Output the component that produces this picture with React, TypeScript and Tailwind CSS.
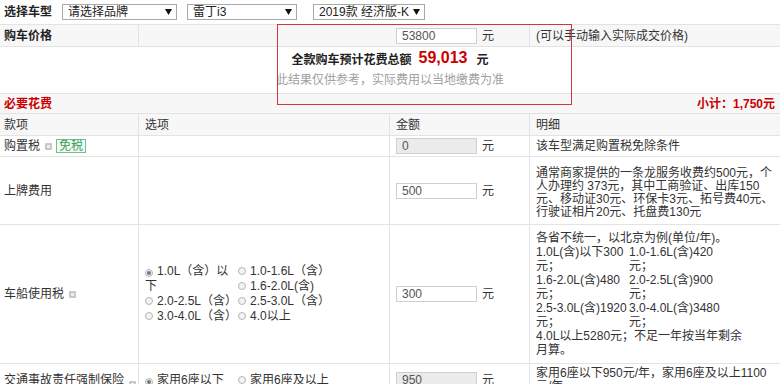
import React from "react";

const FONT = "font-['Liberation_Sans','Noto_Sans_CJK_SC',sans-serif]";

function Arrow() {
  return (
    <svg width="7" height="6" viewBox="0 0 7 6" className="shrink-0">
      <path d="M0 0 H7 L3.5 6 Z" fill="#111" />
    </svg>
  );
}

function FakeSelect({ label, width, ml }: { label: string; width: string; ml: string }) {
  return (
    <div
      className={`${width} ${ml} h-[16px] flex items-center justify-between border border-[#a9a9a9] bg-white pl-[5px] pr-[4px] text-[12px] leading-[14px] text-[#222]`}
    >
      <span className="whitespace-nowrap">{label}</span>
      <Arrow />
    </div>
  );
}

function Tip() {
  return (
    <span className="ml-[5px] inline-flex h-[7px] w-[7px] items-center justify-center rounded-[1px] bg-[#c8c8c8] align-middle">
      <span className="h-[3px] w-[3px] bg-[#eee]" />
    </span>
  );
}

function Radio({ on }: { on?: boolean }) {
  return (
    <span className="mr-[4px] inline-flex h-[8px] w-[8px] items-center justify-center rounded-full border border-[#b5b5b5] bg-[#f3f3f3] align-[-0px]">
      {on && <span className="h-[4px] w-[4px] rounded-full bg-[#777]" />}
    </span>
  );
}

function Amount({ value, disabled }: { value: string; disabled?: boolean }) {
  return (
    <div className="flex items-center">
      <div
        className={`h-[16px] w-[81px] border border-[#d0d0d0] pl-[5px] text-[12px] leading-[14px] text-[#555] ${
          disabled ? "bg-[#ebebeb]" : "bg-white"
        }`}
      >
        {value}
      </div>
      <span className="ml-[5px] text-[12px]">元</span>
    </div>
  );
}

const COLS = "grid grid-cols-[139px_251px_140px_1fr]";

function Row({
  h,
  bg = "bg-white",
  a,
  b,
  c,
  d,
}: {
  h: string;
  bg?: string;
  a: React.ReactNode;
  b?: React.ReactNode;
  c?: React.ReactNode;
  d?: React.ReactNode;
}) {
  return (
    <div className={`${COLS} ${h} ${bg} border-b border-[#e3e3e3]`}>
      <div className="flex items-center border-r border-[#e3e3e3] pl-[4px]">{a}</div>
      <div className="flex items-center border-r border-[#e3e3e3] pl-[6px]">{b}</div>
      <div className="flex items-center border-r border-[#e3e3e3] pl-[6px]">{c}</div>
      <div className="flex items-center pl-[6px]">{d}</div>
    </div>
  );
}

export default function App() {
  return (
    <div className={`${FONT} relative h-[384px] w-[780px] overflow-hidden bg-white text-[12px] leading-[14px] text-[#333]`}>
      {/* 选择车型 */}
      <div className="flex h-[24px] items-center pl-[4px]">
        <span className="text-[12px] font-bold text-[#222]">选择车型</span>
        <FakeSelect label="请选择品牌" width="w-[115px]" ml="ml-[10px]" />
        <FakeSelect label="雷丁i3" width="w-[110px]" ml="ml-[10px]" />
        <FakeSelect label="2019款 经济版-K" width="w-[112px]" ml="ml-[16px]" />
      </div>

      <div className="border-t border-[#e3e3e3]">
        {/* 购车价格 */}
        <div className={`grid grid-cols-[139px_251px_140px_1fr] h-[22px] bg-[#f7f7f7] border-b border-[#e3e3e3]`}>
          <div className="flex items-center border-r border-[#e3e3e3] pl-[4px] font-bold text-[#222]">购车价格</div>
          <div />
          <div className="flex items-center border-r border-[#e3e3e3] pl-[6px]">
            <Amount value="53800" />
          </div>
          <div className="flex items-center pl-[6px]">(可以手动输入实际成交价格)</div>
        </div>

        {/* 总额 */}
        <div className="flex h-[47px] flex-col items-center border-b border-[#e3e3e3] bg-white pt-[4px]">
          <div className="flex h-[16px] items-end">
            <span className="font-bold text-[#222]">全款购车预计花费总额</span>
            <span className="ml-[7px] text-[16px] font-bold leading-[18px] text-[#cc0000]">59,013</span>
            <span className="ml-[9px] font-bold text-[#222]">元</span>
          </div>
          <div className="mt-[6px] text-[#a0a0a0]">此结果仅供参考，实际费用以当地缴费为准</div>
        </div>

        {/* 必要花费 */}
        <div className="flex h-[20px] items-center justify-between border-b border-[#e3e3e3] bg-[#f7f7f7] pl-[4px] pr-[5px] font-bold text-[#cc0000]">
          <span>必要花费</span>
          <span>小计：1,750元</span>
        </div>

        <Row h="h-[22px]" bg="bg-[#f7f7f7]" a="款项" b="选项" c="金额" d="明细" />

        <Row
          h="h-[21px]"
          a={
            <div className="flex items-center">
              <span>购置税</span>
              <Tip />
              <span className="ml-[4px] border border-[#6fc08a] bg-[#f4fbf5] px-[2px] text-[12px] leading-[12px] text-[#3f9e5a]">
                免税
              </span>
            </div>
          }
          c={<Amount value="0" disabled />}
          d="该车型满足购置税免除条件"
        />

        <Row
          h="h-[68px]"
          a="上牌费用"
          c={<Amount value="500" />}
          d={
            <div className="mt-[4px] leading-[13px]">
              <div>通常商家提供的一条龙服务收费约500元，个</div>
              <div>人办理约 373元，其中工商验证、出库150</div>
              <div>元、移动证30元、环保卡3元、拓号费40元、</div>
              <div>行驶证相片20元、托盘费130元</div>
            </div>
          }
        />

        <Row
          h="h-[139px]"
          a={
            <div className="flex items-center">
              <span>车船使用税</span>
              <Tip />
            </div>
          }
          b={
            <div className="flex leading-[15px]">
              <div className="w-[93px]">
                <div>
                  <Radio on />
                  1.0L（含）以
                </div>
                <div>下</div>
                <div>
                  <Radio />
                  2.0-2.5L（含）
                </div>
                <div>
                  <Radio />
                  3.0-4.0L（含）
                </div>
              </div>
              <div>
                <div>
                  <Radio />
                  1.0-1.6L（含）
                </div>
                <div>
                  <Radio />
                  1.6-2.0L(含)
                </div>
                <div>
                  <Radio />
                  2.5-3.0L（含）
                </div>
                <div>
                  <Radio />
                  4.0以上
                </div>
              </div>
            </div>
          }
          c={<Amount value="300" />}
          d={
            <div className="leading-[14px]">
              <div>各省不统一，以北京为例(单位/年)。</div>
              <div className="grid grid-cols-[93px_1fr]">
                <div>1.0L(含)以下300</div>
                <div>1.0-1.6L(含)420</div>
                <div>元；</div>
                <div>元；</div>
                <div>1.6-2.0L(含)480</div>
                <div>2.0-2.5L(含)900</div>
                <div>元；</div>
                <div>元；</div>
                <div>2.5-3.0L(含)1920</div>
                <div>3.0-4.0L(含)3480</div>
                <div>元；</div>
                <div>元；</div>
              </div>
              <div>4.0L以上5280元；不足一年按当年剩余</div>
              <div>月算。</div>
            </div>
          }
        />

        <div className={`${COLS} h-[30px] bg-white`}>
          <div className="flex items-start border-r border-[#e3e3e3] pl-[4px] pt-[9px]">
            <span>交通事故责任强制保险</span>
            <span className="mt-[4px]">
              <Tip />
            </span>
          </div>
          <div className="flex items-start border-r border-[#e3e3e3] pl-[6px] pt-[9px]">
            <div className="w-[93px]">
              <Radio on />
              家用6座以下
            </div>
            <div>
              <Radio />
              家用6座及以上
            </div>
          </div>
          <div className="flex items-start border-r border-[#e3e3e3] pl-[6px] pt-[8px]">
            <Amount value="950" disabled />
          </div>
          <div className="pl-[6px] pt-[3px] leading-[13px]">
            <div>家用6座以下950元/年，家用6座及以上1100</div>
            <div>元/年。</div>
          </div>
        </div>
      </div>

      {/* 红框 */}
      <div className="absolute left-[277px] top-[24px] h-[81px] w-[295px] border border-[#d2363f]" />
    </div>
  );
}
